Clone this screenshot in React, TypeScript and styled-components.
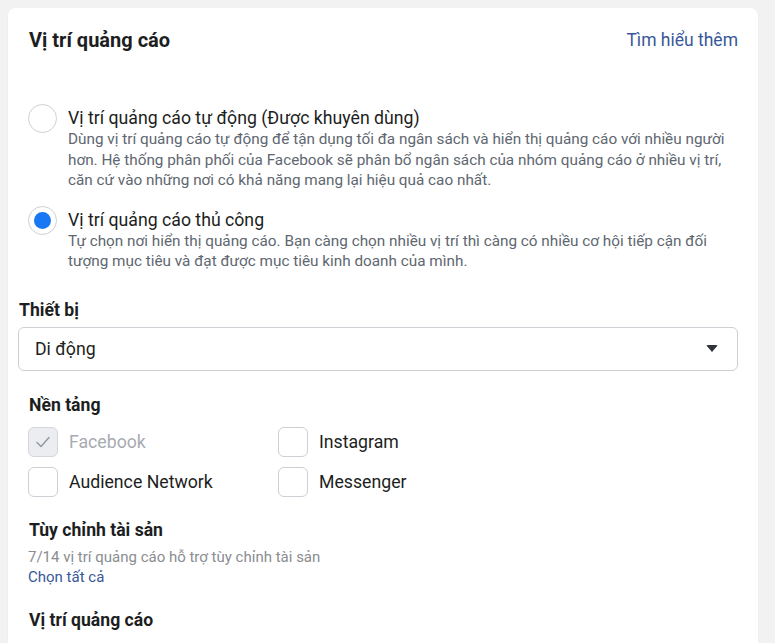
import React, { useState } from 'react';
import styled, { createGlobalStyle } from 'styled-components';

const GlobalStyle = createGlobalStyle`
  html, body {
    margin: 0;
    padding: 0;
    background: #f2f2f2;
    font-family: Roboto, "Noto Sans", "Liberation Sans", sans-serif;
    color: #1c1e21;
  }
`;

const Page = styled.div`
  padding: 8px 17px 0 8px;
  height: 643px;
  overflow: hidden;
  box-sizing: border-box;
`;

const Card = styled.div`
  background: #fff;
  border-radius: 8px;
  box-shadow: 0 1px 2px rgba(0, 0, 0, 0.06);
  padding: 20px 20px 40px 10px;
  min-height: 700px;
`;

const HeaderRow = styled.div`
  display: flex;
  justify-content: space-between;
  align-items: center;
  padding-left: 11px;
  height: 24px;
`;

const Title = styled.h2`
  margin: 0;
  font-size: 20px;
  line-height: 24px;
  font-weight: 700;
  color: #1c1e21;
`;

const LinkText = styled.a<{ size?: number }>`
  display: block;
  width: fit-content;
  color: #385898;
  font-size: ${p => p.size ?? 17.5}px;
  line-height: ${p => Math.round((p.size ?? 17.5) + 6)}px;
  text-decoration: none;
  cursor: pointer;
`;

const RadioGroup = styled.div`
  display: flex;
  flex-direction: column;
  gap: 18px;
  padding-left: 10px;
  margin-top: 55px;
`;

const RadioRow = styled.label`
  display: flex;
  gap: 11px;
  cursor: pointer;
`;

const RadioCircle = styled.span<{ checked: boolean }>`
  flex: none;
  width: 29px;
  height: 29px;
  box-sizing: border-box;
  border-radius: 50%;
  border: 1px solid #ccd0d5;
  background: #fff;
  display: flex;
  align-items: center;
  justify-content: center;
  margin-top: -3px;

  &::after {
    content: '';
    width: 17px;
    height: 17px;
    border-radius: 50%;
    background: ${p => (p.checked ? '#1877f2' : 'transparent')};
  }
`;

const RadioText = styled.div`
  display: flex;
  flex-direction: column;
  max-width: 660px;
`;

const OptionLabel = styled.span<{ muted?: boolean }>`
  font-size: 17.7px;
  line-height: 22px;
  color: ${p => (p.muted ? '#a7abb1' : '#1c1e21')};
`;

const Description = styled.p`
  margin: 0;
  font-size: 15.3px;
  line-height: 20.5px;
  color: #606770;
`;

const SectionLabel = styled.div<{ indent?: number; top: number }>`
  font-size: 17.6px;
  line-height: 22px;
  font-weight: 700;
  color: #1c1e21;
  padding-left: ${p => p.indent ?? 0}px;
  margin-top: ${p => p.top}px;
`;

const Select = styled.div`
  margin-top: 6px;
  height: 44px;
  box-sizing: border-box;
  border: 1px solid #ccd0d5;
  border-radius: 6px;
  display: flex;
  align-items: center;
  justify-content: space-between;
  padding: 0 19px 0 16px;
  font-size: 17.7px;
  color: #1c1e21;
  cursor: pointer;
`;

const Caret = styled.span`
  width: 0;
  height: 0;
  border-left: 6px solid transparent;
  border-right: 6px solid transparent;
  border-top: 7px solid #303338;
  border-radius: 2px;
`;

const CheckGrid = styled.div`
  display: grid;
  grid-template-columns: 250px 250px;
  row-gap: 10px;
  padding-left: 10px;
  margin-top: 11px;
`;

const CheckRow = styled.label`
  display: flex;
  align-items: center;
  gap: 11px;
  height: 30px;
  cursor: pointer;
`;

const Box = styled.span<{ disabled?: boolean }>`
  flex: none;
  width: 30px;
  height: 30px;
  box-sizing: border-box;
  border-radius: 6px;
  border: 1px solid ${p => (p.disabled ? '#d3d6db' : '#ccd0d5')};
  background: ${p => (p.disabled ? '#ebedf0' : '#fff')};
  display: flex;
  align-items: center;
  justify-content: center;
`;

const Block = styled.div`
  padding-left: 10px;
`;

const SubText = styled.div`
  margin-top: 6px;
  font-size: 15px;
  line-height: 20px;
  color: #8a8d91;
`;

const options = [
  {
    label: 'Vị trí quảng cáo tự động (Được khuyên dùng)',
    desc: 'Dùng vị trí quảng cáo tự động để tận dụng tối đa ngân sách và hiển thị quảng cáo với nhiều người hơn. Hệ thống phân phối của Facebook sẽ phân bổ ngân sách của nhóm quảng cáo ở nhiều vị trí, căn cứ vào những nơi có khả năng mang lại hiệu quả cao nhất.',
  },
  {
    label: 'Vị trí quảng cáo thủ công',
    desc: 'Tự chọn nơi hiển thị quảng cáo. Bạn càng chọn nhiều vị trí thì càng có nhiều cơ hội tiếp cận đối tượng mục tiêu và đạt được mục tiêu kinh doanh của mình.',
  },
];

const platforms = [
  { name: 'Facebook', checked: true, disabled: true },
  { name: 'Instagram', checked: false },
  { name: 'Audience Network', checked: false },
  { name: 'Messenger', checked: false },
];

export default function App() {
  const [mode, setMode] = useState(1);

  return (
    <>
      <GlobalStyle />
      <Page>
        <Card>
          <HeaderRow>
            <Title>Vị trí quảng cáo</Title>
            <LinkText>Tìm hiểu thêm</LinkText>
          </HeaderRow>

          <RadioGroup>
            {options.map((o, i) => (
              <RadioRow key={o.label} onClick={() => setMode(i)}>
                <RadioCircle checked={mode === i} />
                <RadioText>
                  <OptionLabel>{o.label}</OptionLabel>
                  <Description>{o.desc}</Description>
                </RadioText>
              </RadioRow>
            ))}
          </RadioGroup>

          <SectionLabel indent={1} top={27}>Thiết bị</SectionLabel>
          <Select>
            <span>Di động</span>
            <Caret />
          </Select>

          <SectionLabel indent={11} top={23}>Nền tảng</SectionLabel>
          <CheckGrid>
            {platforms.map(p => (
              <CheckRow key={p.name}>
                <Box disabled={p.disabled}>
                  {p.checked && (
                    <svg width="18" height="18" viewBox="0 0 18 18" fill="none">
                      <path d="M3 9.5l4 4 8-9" stroke="#8d949e" strokeWidth="1.3" strokeLinecap="round" strokeLinejoin="round" />
                    </svg>
                  )}
                </Box>
                <OptionLabel muted={p.disabled}>{p.name}</OptionLabel>
              </CheckRow>
            ))}
          </CheckGrid>

          <SectionLabel indent={11} top={22}>Tùy chỉnh tài sản</SectionLabel>
          <Block>
            <SubText>7/14 vị trí quảng cáo hỗ trợ tùy chỉnh tài sản</SubText>
            <LinkText size={15}>Chọn tất cả</LinkText>
          </Block>

          <SectionLabel indent={11} top={21}>Vị trí quảng cáo</SectionLabel>
        </Card>
      </Page>
    </>
  );
}
